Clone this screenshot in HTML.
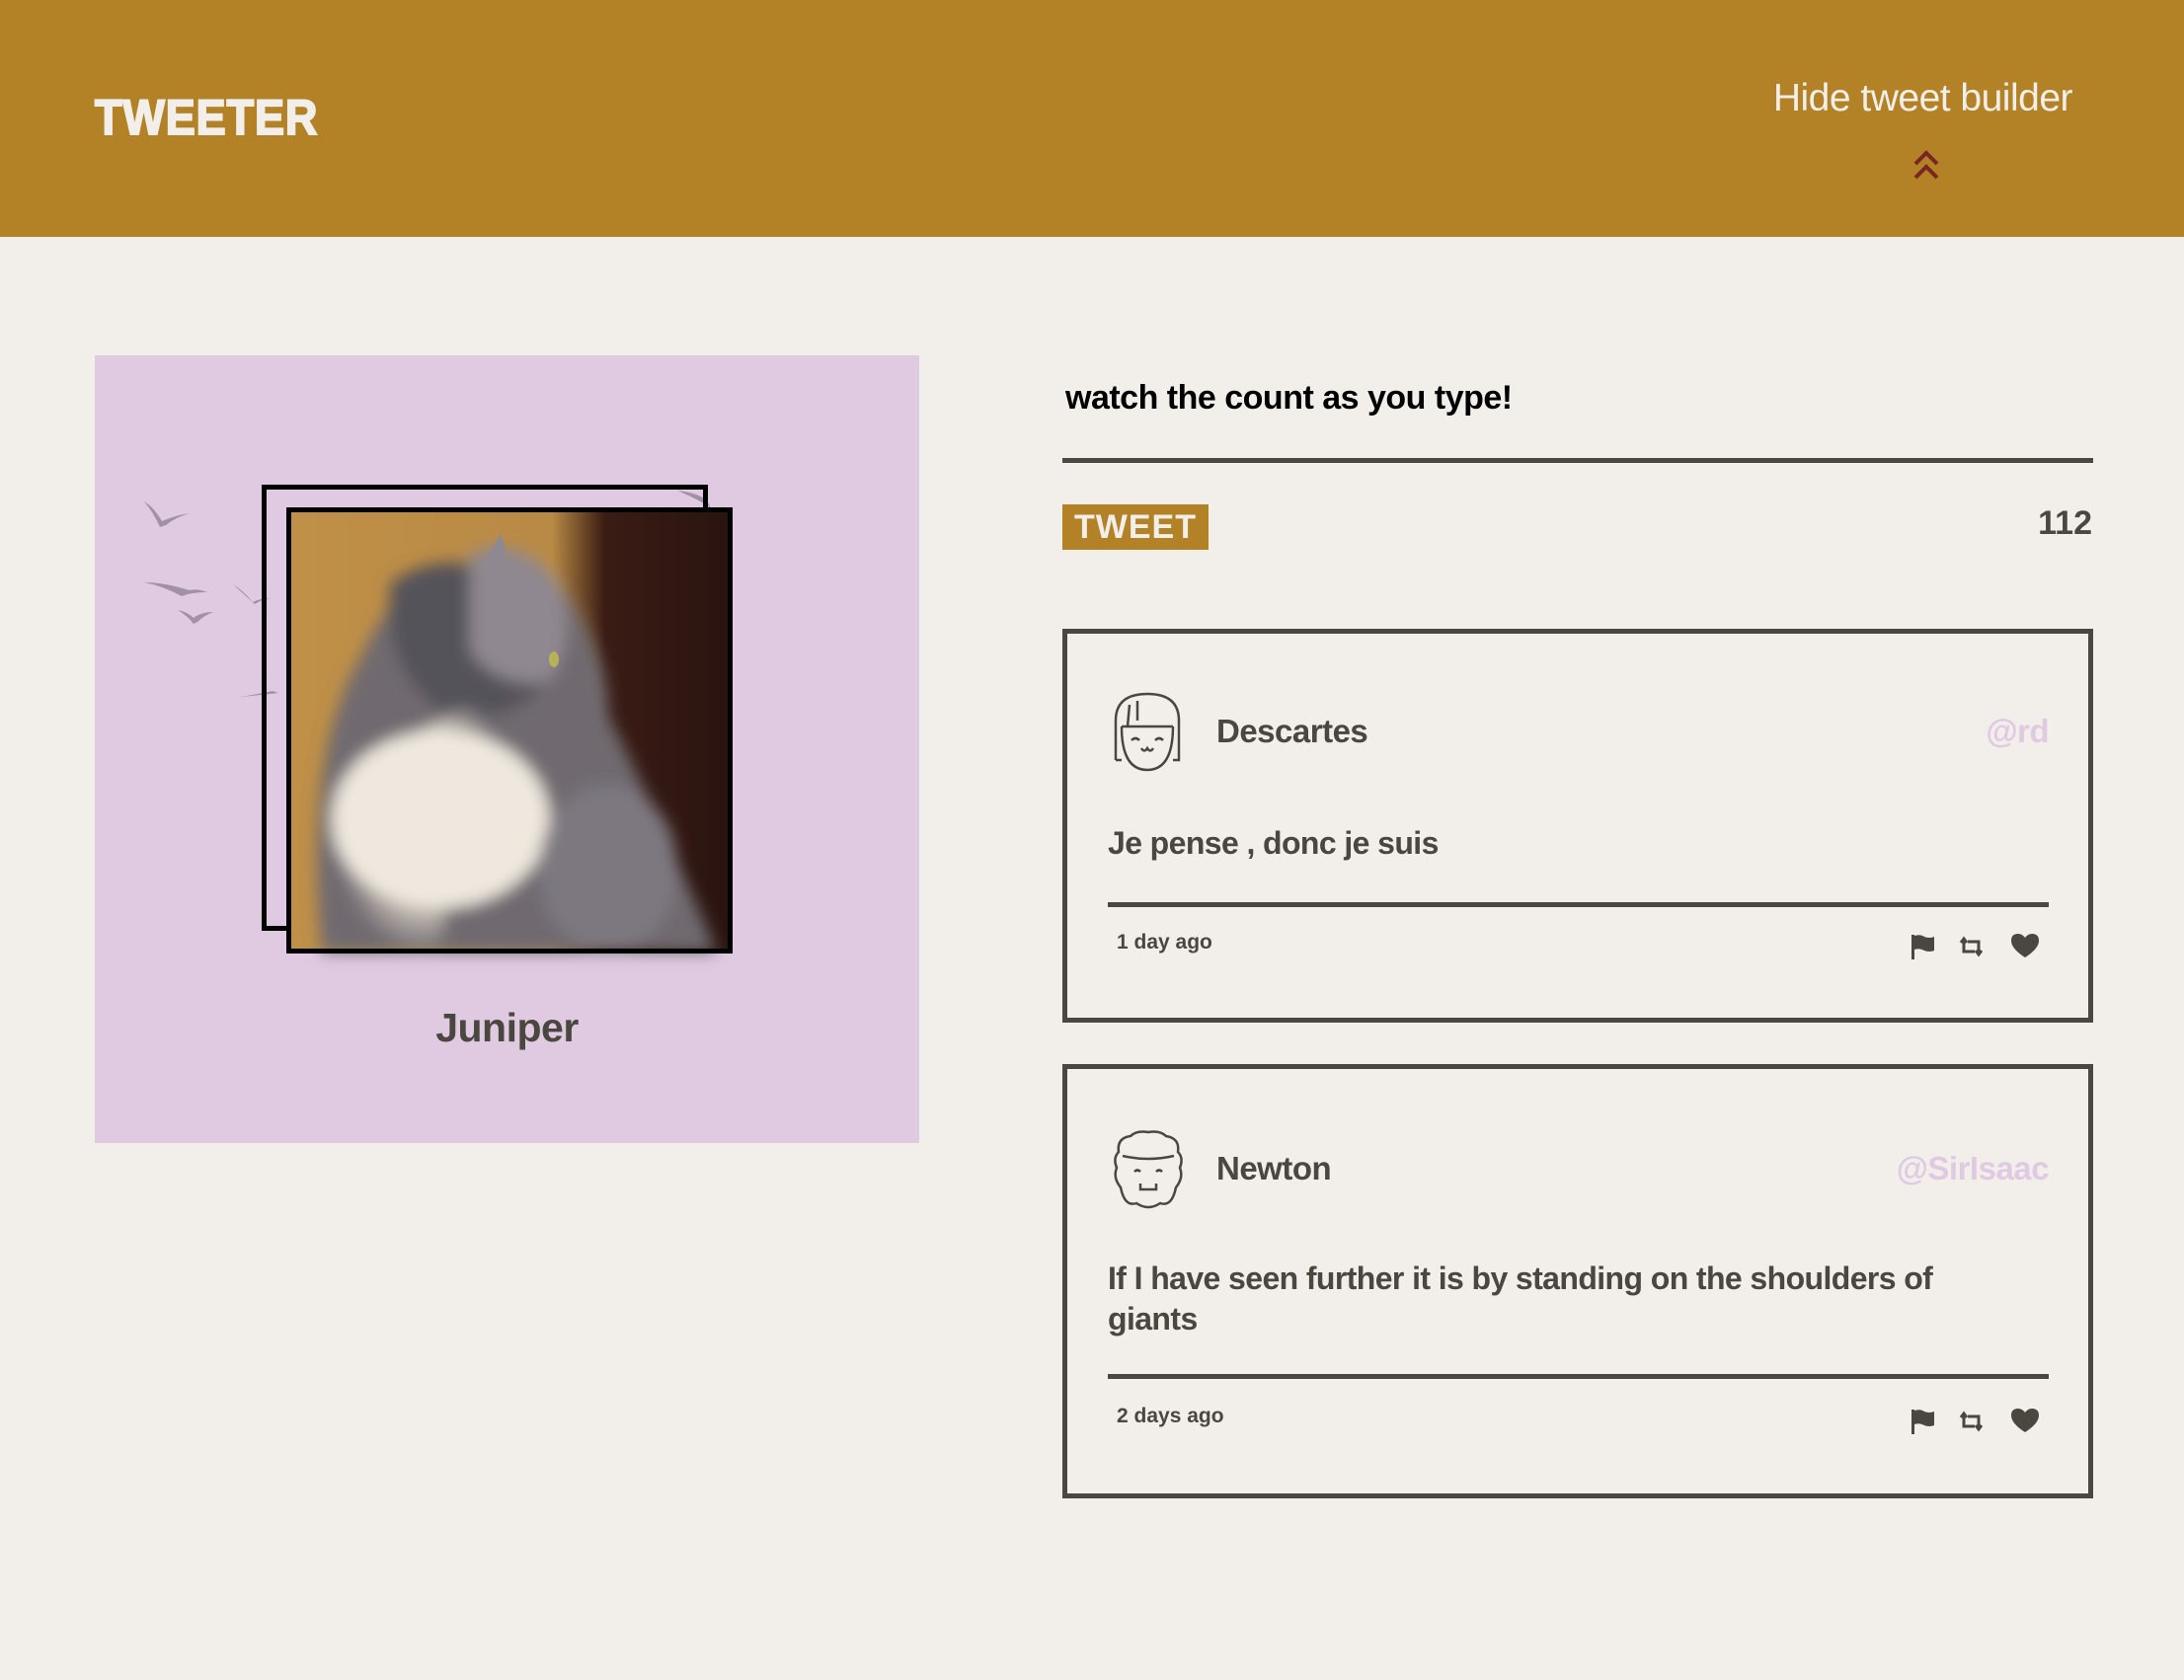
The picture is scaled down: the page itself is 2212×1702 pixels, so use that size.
<!DOCTYPE html>
<html><head><meta charset="utf-8"><style>
*{margin:0;padding:0;box-sizing:border-box}
body{width:2212px;height:1702px;background:#f2efea;font-family:"Liberation Sans",sans-serif;color:#4a4640;position:relative;overflow:hidden}
.hdr{position:absolute;left:0;top:0;width:2212px;height:240px;background:#b38226}
.logo{position:absolute;left:96px;top:90px;font-size:50px;font-weight:900;color:#f2efea;letter-spacing:1px;-webkit-text-stroke:2px #f2efea;transform:scaleX(0.9);transform-origin:left top}
.hide{position:absolute;right:113px;top:78px;font-size:39px;color:#f2efea;letter-spacing:-0.5px}
.chev{position:absolute;left:1936px;top:150px}
.lav{position:absolute;left:96px;top:360px;width:835px;height:798px;background:#dfcae2}
.jun{position:absolute;left:96px;width:835px;top:1018px;text-align:center;font-size:41px;font-weight:bold;color:#4a4640;letter-spacing:-0.5px}
.abs{position:absolute}
.type{left:1079px;top:384px;font-size:34px;font-weight:bold;color:#000;letter-spacing:-0.5px}
.line{background:#4a4640}
.tweet{left:1076px;top:511px;width:148px;height:46px;background:#b38226;color:#f2efea;font-weight:900;font-size:34px;text-align:center;line-height:46px;letter-spacing:1px}
.cnt{right:93px;top:511px;font-size:34px;font-weight:900;color:#4a4640}
.card{position:absolute;left:1076px;width:1044px;border:5px solid #4a4640}
.nm{position:absolute;left:151px;font-size:33px;font-weight:bold;letter-spacing:-0.5px}
.hd{position:absolute;right:40px;font-size:33px;font-weight:bold;color:#dfcae2;letter-spacing:-0.5px}
.tx{position:absolute;left:41px;font-size:32px;font-weight:bold;letter-spacing:-0.6px;line-height:41px}
.hr{position:absolute;left:41px;right:40px;height:5px;background:#4a4640}
.ago{position:absolute;left:50px;font-size:21px;font-weight:bold}
.ic{position:absolute;left:840px;width:150px;height:30px}
</style></head><body>
<div class="hdr">
<div class="logo">TWEETER</div>
<div class="hide">Hide tweet builder</div>
<svg class="chev" width="30" height="34" viewBox="0 0 30 34"><path d="M4 16 L15 5 L26 16 M4 30 L15 19 L26 30" fill="none" stroke="#7a2520" stroke-width="4"/></svg>
</div>
<div class="lav"></div>
<svg class="abs" style="left:96px;top:360px" width="835" height="798" viewBox="0 0 835 798">
<g fill="#a190a6">
<path d="M50 148 q10 6 18 20 q14-6 28-8 q-14 4-24 12 l-6 2 q-6-14-16-26z"/>
<path d="M50 230 q20 0 46 8 q8-2 18 2 q-12 0-20 2 l-6 2 q-18-10-38-14z"/>
<path d="M84 258 q10 2 16 8 q8-6 20-6 q-10 4-16 10 l-4 2 q-6-8-16-14z"/>
<path d="M140 232 q10 6 20 18 q8-4 18-4 q-10 2-16 6z"/>
<path d="M146 346 q16-2 34-6 l6 2 q-16 2-40 4z"/>
<path d="M590 137 q20 2 30 10 l4 8 q-10-8-34-18z"/>
</g>
<rect x="171.5" y="133.5" width="447" height="447" fill="none" stroke="#000" stroke-width="5"/>
<defs><linearGradient id="bg" x1="0" x2="1"><stop offset="0" stop-color="#c09048"/><stop offset=".6" stop-color="#b98a45"/><stop offset=".72" stop-color="#3a1c14"/><stop offset="1" stop-color="#2a1410"/></linearGradient>
<radialGradient id="wh" cx=".5" cy=".5" r=".5"><stop offset="0" stop-color="#fbf8f2"/><stop offset=".6" stop-color="#ddd4c8"/><stop offset="1" stop-color="#ddd4c8" stop-opacity="0"/></radialGradient>
<filter id="bl"><feGaussianBlur stdDeviation="8"/></filter></defs>
<rect x="194" y="155" width="448" height="450" fill="url(#bg)"/>
<g filter="url(#bl)">
<path d="M230 605 q-20-200 40-300 q40-90 110-90 q60-10 100 30 q40 60 40 120 q60 120 110 240z" fill="#6f6a70"/>
<path d="M300 230 q60-40 120 0 q40 40 30 110 q-40 40-100 20 q-60-40-50-130z" fill="#55525a"/>
<path d="M380 200 q50-20 90 30 q20 60-10 100 q-50 10-80-30z" fill="#8f8890"/>
<path d="M420 330 q20 60-20 120 q-40 60-50 150 l-100 5 q-30-120 20-200 q60-20 150-75z" fill="url(#wh)"/>
<ellipse cx="350" cy="470" rx="110" ry="90" fill="#eee8de"/>
<ellipse cx="520" cy="520" rx="70" ry="85" fill="#7d7880"/>
</g>
<path d="M390 215 l22-35 l8 40z" fill="#8f8890"/>
<ellipse cx="465" cy="308" rx="5" ry="8" fill="#b9b05a"/>
<rect x="196.5" y="156.5" width="447" height="447" fill="none" stroke="#000" stroke-width="5"/>
</svg>
<div class="jun">Juniper</div>

<div class="abs type">watch the count as you type!</div>
<div class="abs line" style="left:1076px;top:464px;width:1044px;height:5px"></div>
<div class="abs tweet">TWEET</div>
<div class="abs cnt">112</div>

<div class="card" style="top:637px;height:399px">
<svg class="abs" style="left:45px;top:58px" width="72" height="84" viewBox="0 0 72 84" fill="none" stroke="#4a4640" stroke-width="2.5"><path d="M4 70 V30 Q4 3 36 3 Q68 3 68 30 V70 H62 M4 70 H10"/><path d="M10 36 H62 M18 14 L16 36 M26 10 V30"/><path d="M10 36 Q10 80 36 80 Q62 80 62 36"/><path d="M20 50 q4-4 8 0 M44 50 q4-4 8 0 M30 58 q3 5 6 0 q3 5 6 0"/></svg>
<div class="nm" style="top:80px">Descartes</div>
<div class="hd" style="top:80px">@rd</div>
<div class="tx" style="top:192px">Je pense , donc je suis</div>
<div class="hr" style="top:272px"></div>
<div class="ago" style="top:301px">1 day ago</div>
<svg class="ic" style="top:302px" viewBox="0 0 150 30" fill="#4a4640"><path d="M15 3 h3 v25 h-3z M18 4 q6-2 10 1 q5 2 10 0 v14 q-5 2-10 0 q-5-3-10-1z"/><path d="M68 8 v12 h11 M65 11 l3-4 l3 4 M83 22 v-12 h-11 M80 19 l3 4 l3-4" fill="none" stroke="#4a4640" stroke-width="3"/><path d="M130 26 q-14-9-14-17 q0-7 7-7 q4 0 7 4 q3-4 7-4 q7 0 7 7 q0 8-14 17z"/></svg>
</div>

<div class="card" style="top:1078px;height:440px">
<svg class="abs" style="left:44px;top:60px" width="76" height="84" viewBox="0 0 76 84" fill="none" stroke="#4a4640" stroke-width="2.5"><path d="M10 60 Q2 50 6 40 Q2 30 8 24 Q6 10 20 8 Q26 2 38 4 Q50 2 56 8 Q70 10 68 24 Q74 30 70 40 Q74 50 66 60 Q62 80 50 76 Q38 84 26 76 Q14 80 10 60z"/><path d="M12 28 Q38 34 64 28"/><path d="M24 44 q3-3 6 0 M46 44 q3-3 6 0 M30 56 v6 h16 v-6"/></svg>
<div class="nm" style="top:82px">Newton</div>
<div class="hd" style="top:82px">@SirIsaac</div>
<div class="tx" style="top:192px">If I have seen further it is by standing on the shoulders of<br>giants</div>
<div class="hr" style="top:309px"></div>
<div class="ago" style="top:340px">2 days ago</div>
<svg class="ic" style="top:342px" viewBox="0 0 150 30" fill="#4a4640"><path d="M15 3 h3 v25 h-3z M18 4 q6-2 10 1 q5 2 10 0 v14 q-5 2-10 0 q-5-3-10-1z"/><path d="M68 8 v12 h11 M65 11 l3-4 l3 4 M83 22 v-12 h-11 M80 19 l3 4 l3-4" fill="none" stroke="#4a4640" stroke-width="3"/><path d="M130 26 q-14-9-14-17 q0-7 7-7 q4 0 7 4 q3-4 7-4 q7 0 7 7 q0 8-14 17z"/></svg>
</div>
</body></html>
